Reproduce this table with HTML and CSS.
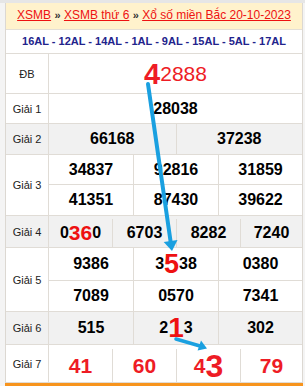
FILE: index.html
```html
<!DOCTYPE html>
<html lang="vi">
<head>
<meta charset="utf-8">
<title>XSMB 20-10-2023</title>
<link rel="stylesheet" href="styles.css">
</head>
<body>
<div class="page">
  <div class="topstrip"></div>
  <div class="board">
    <div class="title"><a href="#">XSMB</a> <b>»</b> <a href="#">XSMB thứ 6</a> <b>»</b> <a href="#">Xổ số miền Bắc 20-10-2023</a></div>
    <div class="codes">16AL - 12AL - 14AL - 1AL - 9AL - 15AL - 5AL - 17AL</div>

    <div class="row h-db">
      <div class="lbl">ĐB</div>
      <div class="vals"><div class="line c1"><div class="cell db"><span class="big4">4</span>2888</div></div></div>
    </div>

    <div class="row h-g1">
      <div class="lbl">Giải 1</div>
      <div class="vals"><div class="line c1"><div class="cell">28038</div></div></div>
    </div>

    <div class="row h-g2 alt">
      <div class="lbl">Giải 2</div>
      <div class="vals"><div class="line c2"><div class="cell">66168</div><div class="cell">37238</div></div></div>
    </div>

    <div class="row h-g3">
      <div class="lbl">Giải 3</div>
      <div class="vals">
        <div class="line c3 sub-a"><div class="cell">34837</div><div class="cell">92816</div><div class="cell">31859</div></div>
        <div class="line c3 sub-b"><div class="cell">41351</div><div class="cell">87430</div><div class="cell">39622</div></div>
      </div>
    </div>

    <div class="row h-g4 alt">
      <div class="lbl">Giải 4</div>
      <div class="vals pad3"><div class="line c4"><div class="cell">0<span class="hl hl21">36</span>0</div><div class="cell">6703</div><div class="cell">8282</div><div class="cell">7240</div></div></div>
    </div>

    <div class="row h-g5">
      <div class="lbl">Giải 5</div>
      <div class="vals">
        <div class="line c3 sub-c"><div class="cell">9386</div><div class="cell">3<span class="hl hl27">5</span>38</div><div class="cell">0380</div></div>
        <div class="line c3 sub-b"><div class="cell">7089</div><div class="cell">0570</div><div class="cell">7341</div></div>
      </div>
    </div>

    <div class="row h-g6 alt">
      <div class="lbl">Giải 6</div>
      <div class="vals"><div class="line c3"><div class="cell">515</div><div class="cell">2<span class="hl hl28">1</span>3</div><div class="cell">302</div></div></div>
    </div>

    <div class="row h-g7">
      <div class="lbl">Giải 7</div>
      <div class="vals pad4"><div class="line c4 red"><div class="cell">41</div><div class="cell">60</div><div class="cell">4<span class="hl hl32">3</span></div><div class="cell">79</div></div></div>
    </div>
  </div>
  <div class="orange"></div>

  <svg class="arrows" width="305" height="386" viewBox="0 0 305 386">
    <line x1="148" y1="84" x2="170.8" y2="243" stroke="#1aa0e0" stroke-width="4" stroke-linecap="round"/>
    <polygon points="172,251 177.5,240.1 163.7,242.1" fill="#1aa0e0"/>
    <line x1="176" y1="339" x2="200" y2="346" stroke="#1aa0e0" stroke-width="3.5" stroke-linecap="round"/>
    <polygon points="207,348.5 201,340.6 197.6,350.4" fill="#1aa0e0"/>
  </svg>
</div>
</body>
</html>
```

FILE: styles.css
```css
* { box-sizing: border-box; }
html, body { margin: 0; padding: 0; }
body {
  background: #f4f4f4;
  font-family: "Liberation Sans", Arial, sans-serif;
  width: 305px;
  height: 386px;
  overflow: hidden;
}
.page { position: relative; width: 305px; height: 386px; }
.topstrip { height: 3px; background: #e6e6e6; }
.board {
  margin: 0 2px 0 5px;
  border-left: 1px solid #dcd8d2;
  border-right: 1px solid #dcd8d2;
  background: #fff;
}
.title {
  height: 27px;
  background: #fff2cc;
  border-bottom: 1px solid #e4dfd6;
  text-align: center;
  font-size: 12px;
  line-height: 25px;
  color: #333;
  white-space: nowrap;
}
.title a { color: #ee1111; text-decoration: underline; }
.title b { color: #333; font-size: 11px; }
.codes {
  height: 24px;
  border-bottom: 1px solid #e0dcd6;
  text-align: center;
  font-size: 11px;
  font-weight: bold;
  line-height: 22px;
  color: #22238c;
  white-space: nowrap;
}
.row {
  display: grid;
  grid-template-columns: 43px 1fr;
  border-bottom: 1px solid #e0dcd6;
}
.row.alt { background: #f1f1f1; }
.h-db { height: 40px; }
.h-g1 { height: 30px; }
.h-g2 { height: 31px; }
.h-g3 { height: 61px; }
.h-g4 { height: 32px; }
.h-g5 { height: 64px; }
.h-g6 { height: 33px; }
.h-g7 { height: 38px; }
.lbl {
  border-right: 1px solid #e0dcd6;
  display: flex;
  align-items: center;
  justify-content: center;
  font-size: 11px;
  color: #222;
}
.vals { display: flex; flex-direction: column; }
.vals.pad3 { padding-top: 3px; }
.vals.pad4 { padding-top: 4px; }
.line { display: grid; flex: 1; }
.line.c1 { grid-template-columns: 1fr; }
.line.c2 { grid-template-columns: 1fr 1fr; }
.line.c3 { grid-template-columns: 84px 85px 1fr; }
.line.c4 { grid-template-columns: 63px 64px 64px 1fr; }
.line.sub-a { flex: 0 0 30px; border-bottom: 1px solid #e0dcd6; }
.line.sub-c { flex: 0 0 33px; border-bottom: 1px solid #e0dcd6; }
.line.sub-b { flex: 1; }
.cell {
  display: flex;
  align-items: center;
  justify-content: center;
  font-size: 16px;
  font-weight: bold;
  color: #000;
  border-left: 1px solid #e0dcd6;
  white-space: nowrap;
  line-height: 1;
}
.cell:first-child { border-left: none; }
.cell.db {
  color: #ee1c25;
  font-size: 21px;
  font-weight: normal;
}
.hl { line-height: 0; }
.big4 { font-size: 29px; font-weight: bold; line-height: 0; }
.hl21 { color: #ee1111; font-size: 21px; }
.hl27 { color: #ee1111; font-size: 27px; }
.hl28 { color: #ee1111; font-size: 28px; }
.hl32 { font-size: 32px; }
.line.red .cell { color: #ee1c25; font-size: 21px; }
.orange { height: 4px; background: #f7941d; margin: 0 2px 0 5px; }
.arrows { position: absolute; left: 0; top: 0; pointer-events: none; }
```
